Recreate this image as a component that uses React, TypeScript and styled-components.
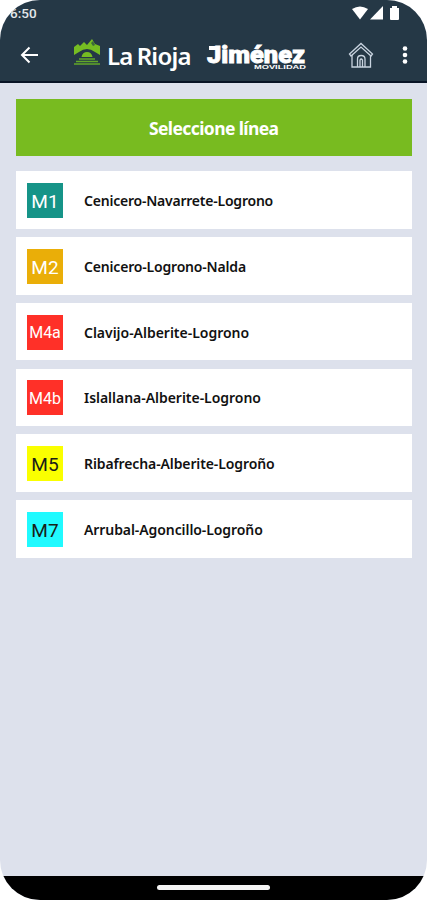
import React from "react";
import styled, { createGlobalStyle } from "styled-components";

const GlobalStyle = createGlobalStyle`
  * { box-sizing: border-box; }
  body { margin: 0; background: #fff; }
`;

const Phone = styled.div`
  display: flex;
  flex-direction: column;
  width: 427px;
  height: 900px;
  overflow: hidden;
  border-radius: 40px;
  background: #dde1ec;
  font-family: "Noto Sans", sans-serif;
`;

const Header = styled.header`
  height: 83px;
  background: #253846;
  border-bottom: 2px solid #081426;
`;

const StatusBar = styled.div`
  display: flex;
  justify-content: space-between;
  height: 27px;
  padding: 5px 26px 0 10px;
  color: #e4e8eb;
  font: 500 13.5px/17px Roboto, sans-serif;
`;

const StatusIcons = styled.svg`
  width: 50px;
  height: 17px;
`;

const Toolbar = styled.div`
  display: flex;
  align-items: center;
  height: 56px;
  padding-left: 16px;
`;

const BackButton = styled.button`
  width: 28px;
  height: 28px;
  padding: 0;
  border: 0;
  background: none;
`;

const Mountain = styled.svg`
  width: 30px;
  height: 30px;
  margin: 0 0 4px 28px;
`;

const RegionName = styled.div`
  display: flex;
  gap: 4px;
  width: 88px;
  margin-left: 5px;
  padding-top: 2px;
  color: #fff;
  font: 600 24px/36px "Noto Sans", sans-serif;
  letter-spacing: -0.75px;
  white-space: nowrap;
`;

const Company = styled.svg`
  width: 106px;
  height: 36px;
  margin-left: 7px;
`;

const HomeButton = styled.button`
  width: 28px;
  height: 30px;
  margin-left: 39px;
  padding: 0;
  border: 0;
  background: none;
`;

const MenuButton = styled.button`
  width: 18px;
  height: 28px;
  margin-left: 21px;
  padding: 0;
  border: 0;
  background: none;
`;

const Content = styled.main`
  flex: 1;
  padding: 16px 15.5px 0 16px;
`;

const Title = styled.h1`
  display: flex;
  align-items: center;
  justify-content: center;
  height: 57px;
  margin: 0 0 15.4px;
  padding-top: 1px;
  color: #fff;
  background: #78bb20;
  font-size: 17.5px;
  font-weight: 700;
  letter-spacing: -0.6px;
`;

const Lines = styled.ul`
  display: grid;
  gap: 8.15px;
  margin: 0;
  padding: 0;
  list-style: none;
`;

const Line = styled.li`
  display: flex;
  align-items: center;
  height: 57.6px;
  padding: 1px 0 0 11px;
  background: #fff;
`;

const Badge = styled.span<{ $color: string; $dark?: boolean; $small?: boolean }>`
  display: flex;
  align-items: center;
  justify-content: center;
  width: 36px;
  height: 35px;
  padding-top: 2px;
  background: ${({ $color }) => $color};
  color: ${({ $dark }) => ($dark ? "#182018" : "#fff")};
  font: 400 ${({ $small }) => ($small ? 16 : 19)}px/1 Roboto, sans-serif;
`;

const LineName = styled.span<{ $tracking: number }>`
  margin-left: 21px;
  color: #111;
  font-size: 14px;
  font-weight: 600;
  letter-spacing: ${({ $tracking }) => $tracking}px;
  white-space: nowrap;
`;

const NavigationBar = styled.footer`
  display: flex;
  justify-content: center;
  height: 24px;
  padding-top: 9px;
  background: #000;
`;

const Handle = styled.div`
  width: 113px;
  height: 5px;
  border-radius: 3px;
  background: #f5f5f5;
`;

const lines = [
  { code: "M1", name: "Cenicero-Navarrete-Logrono", color: "#169488", tracking: -0.22 },
  { code: "M2", name: "Cenicero-Logrono-Nalda", color: "#eaae08", tracking: -0.18 },
  { code: "M4a", name: "Clavijo-Alberite-Logrono", color: "#ff3028", small: true, tracking: -0.02 },
  { code: "M4b", name: "Islallana-Alberite-Logrono", color: "#ff3028", small: true, tracking: -0.03 },
  { code: "M5", name: "Ribafrecha-Alberite-Logroño", color: "#faff00", dark: true, tracking: -0.11 },
  { code: "M7", name: "Arrubal-Agoncillo-Logroño", color: "#20faff", dark: true, tracking: -0.08 },
];

export default function App() {
  return (
    <>
      <GlobalStyle />
      <Phone>
        <Header>
          <StatusBar>
            <span>6:50</span>
            <StatusIcons viewBox="0 0 50 17" fill="#fff">
              <path d="M1 4Q9-1 17 4L9 14.5Z" />
              <path d="M19 14.5 32 1V14.5Z" />
              <path d="M39 3H41V1H46V3H48V14Q48 15 47 15H40Q39 15 39 14Z" />
            </StatusIcons>
          </StatusBar>
          <Toolbar>
            <BackButton aria-label="Volver">
              <svg width="28" height="28" viewBox="0 0 28 28" fill="none" stroke="#fff" strokeWidth="2">
                <path d="M22 14H7M13.5 6.5 6 14l7.5 7.5" />
              </svg>
            </BackButton>
            <Mountain viewBox="0 0 30 30" fill="#76bd22">
              <path d="M2 9 6 6 8 8 12 4 15 7 20 1 23 6 28 8V17L23 14Q15 8 7 14L2 17Z" />
              <path d="M9.500 19Q10.500 14 15 14T20.500 19Z" />
              <path d="M7 21H23M4 23.500H26M2 26H28" stroke="#62a729" strokeWidth="1.500" />
              <path d="m19 5 2-2 2 4-2 1Z" fill="#3b6939" />
            </Mountain>
            <RegionName><span>La</span><span>Rioja</span></RegionName>
            <Company viewBox="0 0 106 36" fill="#fff">
              <text x="5" y="26" stroke="#fff" strokeWidth=".8" fontFamily="Roboto" fontWeight="900" fontSize="23" textLength="98" lengthAdjust="spacingAndGlyphs">Jiménez</text>
              <path d="M7 9H17V13H7Z" />
              <text x="52" y="31.5" fontFamily="Liberation Sans" fontWeight="700" fontSize="5.500" textLength="52" lengthAdjust="spacingAndGlyphs">MOVILIDAD</text>
            </Company>
            <HomeButton aria-label="Inicio">
              <svg width="28" height="30" viewBox="0 0 28 30" fill="none" stroke="#c8d3df" strokeWidth="1.3">
                <path d="m2.5 14 11.5-10.5L25.5 14 24 16 14 7 4 16Z" />
                <path d="M5 15V27H23.5V15M10.5 27V19Q10.5 15.5 14.2 15.5T18 19V27M13 27V20Q14.2 18 15.5 20V27" />
              </svg>
            </HomeButton>
            <MenuButton aria-label="Más opciones">
              <svg width="18" height="28" viewBox="0 0 18 28" fill="#fff">
                <circle cx="9" cy="7.5" r="2.3" /><circle cx="9" cy="14" r="2.3" /><circle cx="9" cy="20.5" r="2.3" />
              </svg>
            </MenuButton>
          </Toolbar>
        </Header>
        <Content>
          <Title>Seleccione línea</Title>
          <Lines>
            {lines.map((line) => (
              <Line key={line.code}>
                <Badge $color={line.color} $dark={line.dark} $small={line.small}>{line.code}</Badge>
                <LineName $tracking={line.tracking}>{line.name}</LineName>
              </Line>
            ))}
          </Lines>
        </Content>
        <NavigationBar><Handle /></NavigationBar>
      </Phone>
    </>
  );
}
